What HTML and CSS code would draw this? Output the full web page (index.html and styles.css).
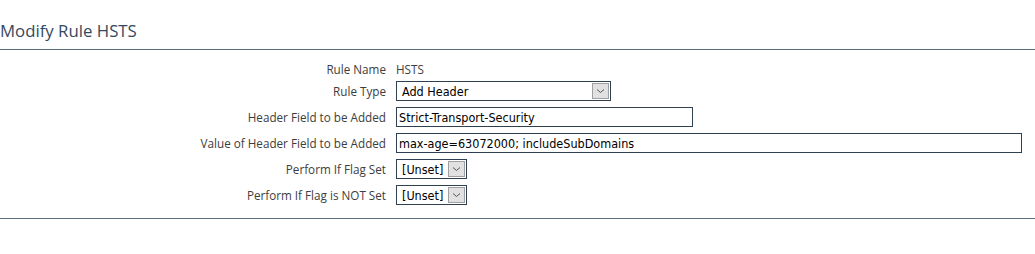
FILE: index.html
```html
<!DOCTYPE html>
<html lang="en">
<head>
    <meta charset="UTF-8">
    <title>Modify Rule HSTS</title>
    <link rel="stylesheet" href="styles.css">
</head>
<body>
    <div class="page-title">
        <h1>Modify Rule HSTS</h1>
    </div>

    <div class="rule-form">
        <label class="field-label">Rule Name</label>
        <div class="field-value">HSTS</div>

        <label class="field-label" for="rule-type">Rule Type</label>
        <div class="field-value">
            <div class="select select-wide">
                <select id="rule-type">
                    <option>Add Header</option>
                </select>
                <span class="select-button">
                    <svg width="9" height="6" viewBox="0 0 9 6"><path d="M1 1.5 L4.5 4.5 L8 1.5" fill="none" stroke="#555" stroke-width="1"/></svg>
                </span>
            </div>
        </div>

        <label class="field-label" for="header-field">Header Field to be Added</label>
        <div class="field-value">
            <input type="text" id="header-field" class="text-input input-medium" value="Strict-Transport-Security">
        </div>

        <label class="field-label" for="header-value">Value of Header Field to be Added</label>
        <div class="field-value">
            <input type="text" id="header-value" class="text-input input-long" value="max-age=63072000; includeSubDomains">
        </div>

        <label class="field-label" for="flag-set">Perform If Flag Set</label>
        <div class="field-value">
            <div class="select select-small">
                <select id="flag-set">
                    <option>[Unset]</option>
                </select>
                <span class="select-button">
                    <svg width="9" height="6" viewBox="0 0 9 6"><path d="M1 1.5 L4.5 4.5 L8 1.5" fill="none" stroke="#555" stroke-width="1"/></svg>
                </span>
            </div>
        </div>

        <label class="field-label" for="flag-not-set">Perform If Flag is NOT Set</label>
        <div class="field-value">
            <div class="select select-small">
                <select id="flag-not-set">
                    <option>[Unset]</option>
                </select>
                <span class="select-button">
                    <svg width="9" height="6" viewBox="0 0 9 6"><path d="M1 1.5 L4.5 4.5 L8 1.5" fill="none" stroke="#555" stroke-width="1"/></svg>
                </span>
            </div>
        </div>
    </div>
</body>
</html>
```

FILE: styles.css
```css
body {
    font-family: 'Open Sans', 'Noto Sans', sans-serif;
    margin: 0;
    padding: 0;
    background-color: #ffffff;
    color: #333;
}

.page-title {
    padding: 20px 0 8px 0;
    border-bottom: 1px solid #5b6f7d;
}

.page-title h1 {
    margin: 0;
    font-size: 16.8px;
    font-weight: normal;
    color: #34495e;
    line-height: 21px;
}

.rule-form {
    display: grid;
    grid-template-columns: 386px 1fr;
    column-gap: 10px;
    align-items: center;
    padding: 10px 0 10px 0;
    border-bottom: 1px solid #5b6f7d;
}

.field-label {
    text-align: right;
    font-size: 11.7px;
    color: #3d3d3d;
    height: 26px;
    line-height: 26px;
}

.field-value {
    font-size: 11.7px;
    color: #3d3d3d;
    height: 26px;
    display: flex;
    align-items: center;
}

.rule-form .field-label:first-child,
.rule-form .field-label:first-child + .field-value {
    height: 18px;
    line-height: 18px;
}

.text-input {
    box-sizing: border-box;
    height: 20px;
    padding: 0 2px;
    border: 1px solid #2f4050;
    font-family: 'DejaVu Sans Condensed', 'DejaVu Sans', sans-serif;
    font-size: 12.5px;
    color: #000;
    outline: none;
}

.input-medium {
    width: 297px;
}

.input-long {
    width: 626px;
}

.select {
    box-sizing: border-box;
    display: flex;
    height: 20px;
    border: 1px solid #2f4050;
    background: #fff;
}

.select-wide {
    width: 215px;
}

.select-small {
    width: 71px;
}

.select select {
    appearance: none;
    -webkit-appearance: none;
    flex: 1;
    min-width: 0;
    border: none;
    background: transparent;
    padding: 0 0 0 5px;
    font-family: 'DejaVu Sans Condensed', 'DejaVu Sans', sans-serif;
    font-size: 12.5px;
    color: #000;
    outline: none;
}

.select-button {
    box-sizing: border-box;
    width: 17px;
    margin: 1px;
    background-color: #e1e1e1;
    border: 1px solid #a0a0a0;
    display: flex;
    align-items: center;
    justify-content: center;
}
```
